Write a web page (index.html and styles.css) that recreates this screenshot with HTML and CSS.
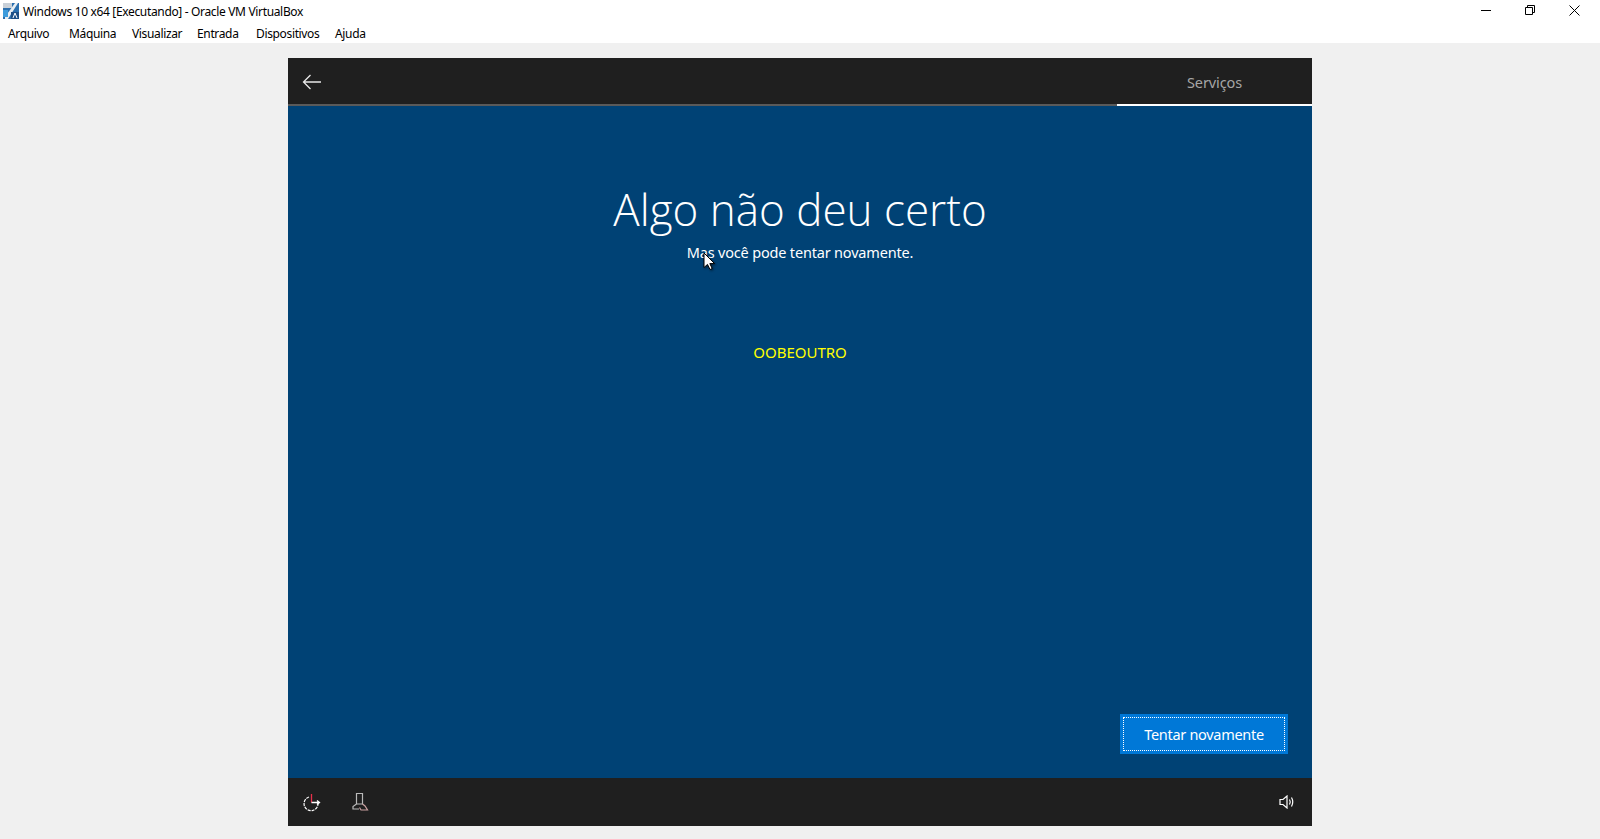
FILE: index.html
```html
<!DOCTYPE html>
<html lang="pt">
<head>
    <meta charset="UTF-8">
    <title>Windows 10 x64 [Executando] - Oracle VM VirtualBox</title>
    <link rel="stylesheet" href="styles.css">
</head>
<body>
<div class="titlebar">
    <svg class="app-icon" width="18" height="18" viewBox="0 0 18 18">
        <rect x="1" y="1" width="16" height="16" fill="#2b6fae"/>
        <rect x="1" y="1" width="9" height="5" fill="#c9d0d8"/>
        <path d="M3 15 L13 1 H16 L6 17 H3 Z" fill="#e9eef2"/>
        <rect x="9" y="10" width="8" height="7" fill="#1d4f86"/>
        <path d="M11 16 L13 11 L15 16" fill="none" stroke="#fff" stroke-width="1"/>
        <path d="M1 8 H6 V15 H1 Z" fill="#3c9bdc"/>
    </svg>
    <span class="window-title">Windows 10 x64 [Executando] - Oracle VM VirtualBox</span>
    <div class="window-btns">
        <svg width="10" height="10" viewBox="0 0 10 10"><path d="M0 5.5 H10" stroke="#000" fill="none"/></svg>
        <svg width="10" height="10" viewBox="0 0 10 10"><path d="M0.5 2.5 H7.5 V9.5 H0.5 Z M2.5 2.5 V0.5 H9.5 V7.5 H7.5" stroke="#000" fill="none"/></svg>
        <svg width="11" height="11" viewBox="0 0 11 11"><path d="M0.5 0.5 L10.5 10.5 M10.5 0.5 L0.5 10.5" stroke="#000" fill="none"/></svg>
    </div>
</div>
<ul class="menubar">
    <li class="m1">Arquivo</li>
    <li class="m2">Máquina</li>
    <li class="m3">Visualizar</li>
    <li class="m4">Entrada</li>
    <li class="m5">Dispositivos</li>
    <li class="m6">Ajuda</li>
</ul>
<div class="desktop">
    <div class="screen">
        <div class="topbar">
            <svg class="back" width="20" height="16" viewBox="0 0 20 16"><path d="M8.5 1 L1.5 8 L8.5 15 M1.5 8 H19" stroke="#e8e8e8" stroke-width="1.3" fill="none"/></svg>
            <div class="tab">Serviços</div>
        </div>
        <div class="progress"><div class="progress-done"></div></div>
        <div class="content">
            <h1>Algo não deu certo</h1>
            <p class="sub">Mas você pode tentar novamente.</p>
            <p class="code">OOBEOUTRO</p>
            <button class="retry"><span>Tentar novamente</span></button>
            <svg class="cursor" width="14" height="19" viewBox="0 0 14 19"><path d="M1 1 V15.5 L4.5 12.4 L7 17.5 L9.2 16.5 L6.8 11.6 H11.6 Z" fill="#fff" stroke="#000" stroke-width="1"/></svg>
        </div>
        <div class="bottombar">
            <svg width="20" height="20" viewBox="0 0 20 20"><path d="M7 5 A7 7 0 1 0 16 11" stroke="#fff" stroke-width="1.2" stroke-dasharray="3 1" fill="none"/><path d="M9.5 2 V10.5" stroke="#e8304a" stroke-width="1.3" fill="none"/><path d="M9.5 10.5 H17 M15 8.5 L17.5 10.5 L15 12.5" stroke="#fff" stroke-width="1.3" fill="none"/></svg>
            <svg class="narrator" width="18" height="20" viewBox="0 0 18 20"><path d="M5.5 1.5 H11.5 V12 H5.5 Z M5.5 12 L2 14.5 V17 H8" stroke="#b9b9b9" stroke-width="1.2" fill="none"/><path d="M11.5 12 L14 14 L16.5 18 H10 L8.5 15.5" stroke="#c9a0a0" stroke-width="1.2" fill="none"/></svg>
            <svg class="volume" width="16" height="14" viewBox="0 0 16 14"><path d="M1 4.5 H4 L8 1 V13 L4 9.5 H1 Z" stroke="#fff" stroke-width="1.2" fill="none"/><path d="M10.5 4.5 Q12 7 10.5 9.5 M12.5 2.5 Q15 7 12.5 11.5" stroke="#fff" stroke-width="1.2" fill="none"/></svg>
        </div>
    </div>
</div>
</body>
</html>
```

FILE: styles.css
```css
* {
    box-sizing: border-box;
}

html, body, ul, li, h1, p {
    margin: 0;
    padding: 0;
}

ul {
    list-style-type: none;
}

body {
    height: 839px;
    overflow: hidden;
    background: #f0f0f0;
    font-family: "Noto Sans", "Open Sans", sans-serif;
    color: #000;
}

.titlebar {
    display: flex;
    align-items: center;
    height: 22px;
    background: #fff;
    padding-left: 2px;
}

.app-icon {
    margin-right: 3px;
}

.window-title {
    font-size: 12px;
    letter-spacing: -0.34px;
}

.window-btns {
    display: flex;
    align-items: center;
    gap: 34px;
    margin-left: auto;
    margin-right: 20px;
    margin-top: -2px;
}

.menubar {
    display: flex;
    height: 21px;
    background: #fff;
    font-size: 12px;
    letter-spacing: -0.35px;
    line-height: 24px;
    padding-left: 8px;
}

.m1 { width: 61px; }
.m2 { width: 63px; }
.m3 { width: 65px; }
.m4 { width: 59px; }
.m5 { width: 79px; }

.desktop {
    display: flex;
    justify-content: center;
    padding-top: 15px;
}

.screen {
    display: flex;
    flex-direction: column;
    width: 1024px;
    height: 768px;
}

.topbar {
    display: flex;
    align-items: center;
    height: 46px;
    background: #1f1f1f;
    padding: 2px 0 0 14px;
}

.tab {
    margin-left: auto;
    width: 195px;
    text-align: center;
    font-size: 14.5px;
    letter-spacing: -0.1px;
    color: #a6a6a6;
}

.progress {
    height: 2px;
    background: #5a5a5a;
}

.progress-done {
    width: 195px;
    height: 2px;
    margin-left: auto;
    background: #fff;
}

.content {
    position: relative;
    flex: 1;
    background: #004275;
    color: #fff;
    text-align: center;
}

h1 {
    margin-top: 71px;
    font-family: "Open Sans", "Noto Sans", sans-serif;
    font-size: 44px;
    font-weight: 300;
    line-height: 64px;
}

.sub {
    font-size: 14.5px;
    letter-spacing: -0.18px;
    line-height: 20px;
    margin-top: 1px;
}

.code {
    margin-top: 80px;
    font-size: 15px;
    line-height: 20px;
    color: #ffff00;
}

.retry {
    position: absolute;
    right: 24px;
    bottom: 24px;
    width: 168px;
    height: 40px;
    padding: 3px;
    background: #0078d7;
    border: 0;
    color: #fff;
    font: 14.5px "Noto Sans", sans-serif;
    letter-spacing: -0.3px;
}

.retry span {
    display: block;
    height: 100%;
    line-height: 32px;
    border: 1px dotted #fff;
}

.cursor {
    position: absolute;
    left: 415px;
    top: 146px;
    filter: drop-shadow(1px 1px 1px rgba(0, 0, 0, 0.5));
}

.bottombar {
    display: flex;
    align-items: center;
    height: 48px;
    background: #1f1f1f;
    padding: 0 17px 0 14px;
}

.narrator {
    margin-left: 29px;
}

.volume {
    margin-left: auto;
}
```
